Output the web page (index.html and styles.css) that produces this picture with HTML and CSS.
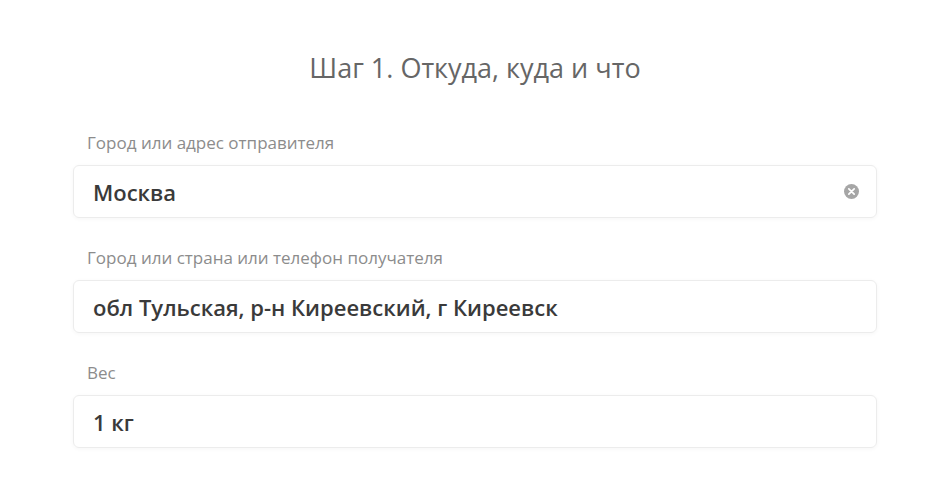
FILE: index.html
```html
<!DOCTYPE html>
<html lang="ru">
<head>
<meta charset="utf-8">
<link rel="stylesheet" href="styles.css">
</head>
<body>
<main class="form">
  <h1 class="title">Шаг 1. Откуда, куда и что</h1>
  <div class="field">
    <label class="label">Город или адрес отправителя</label>
    <div class="input">
      <span class="value">Москва</span>
      <svg class="icon" width="15" height="15" viewBox="0 0 14 14"><circle cx="7" cy="7" r="7" fill="#a6a6a6"/><path d="M4.5 4.5l5 5M9.5 4.5l-5 5" stroke="#fff" stroke-width="1.6" stroke-linecap="round"/></svg>
    </div>
  </div>
  <div class="field">
    <label class="label">Город или страна или телефон получателя</label>
    <div class="input">
      <span class="value">обл Тульская, р-н Киреевский, г Киреевск</span>
    </div>
  </div>
  <div class="field">
    <label class="label">Вес</label>
    <div class="input">
      <span class="value">1 кг</span>
    </div>
  </div>
</main>
</body>
</html>
```
FILE: styles.css
```css
html, body {
  margin: 0;
  padding: 0;
  background: #ffffff;
}
body {
  font-family: "Open Sans", "Noto Sans", sans-serif;
  color: #333;
}
.form {
  width: 804px;
  margin: 0 auto;
  padding-top: 50px;
  display: flex;
  flex-direction: column;
}
.title {
  margin: 0 0 45px;
  text-align: center;
  font-size: 27px;
  font-weight: 400;
  color: #666666;
  line-height: 36px;
}
.field {
  display: flex;
  flex-direction: column;
  margin-bottom: 28px;
}
.label {
  font-size: 17px;
  color: #8c8c8c;
  line-height: 24px;
  padding-left: 14px;
  margin-bottom: 10px;
}
.input {
  height: 53px;
  box-sizing: border-box;
  border: 1px solid #ececec;
  border-radius: 6px;
  box-shadow: 0 1px 4px rgba(0,0,0,0.04);
  display: flex;
  align-items: center;
  padding: 0 17px 0 19px;
}
.value {
  flex: 1;
  font-size: 22px;
  font-weight: 600;
  color: #3a3a3a;
}
.icon {
  flex: none;
}
```
